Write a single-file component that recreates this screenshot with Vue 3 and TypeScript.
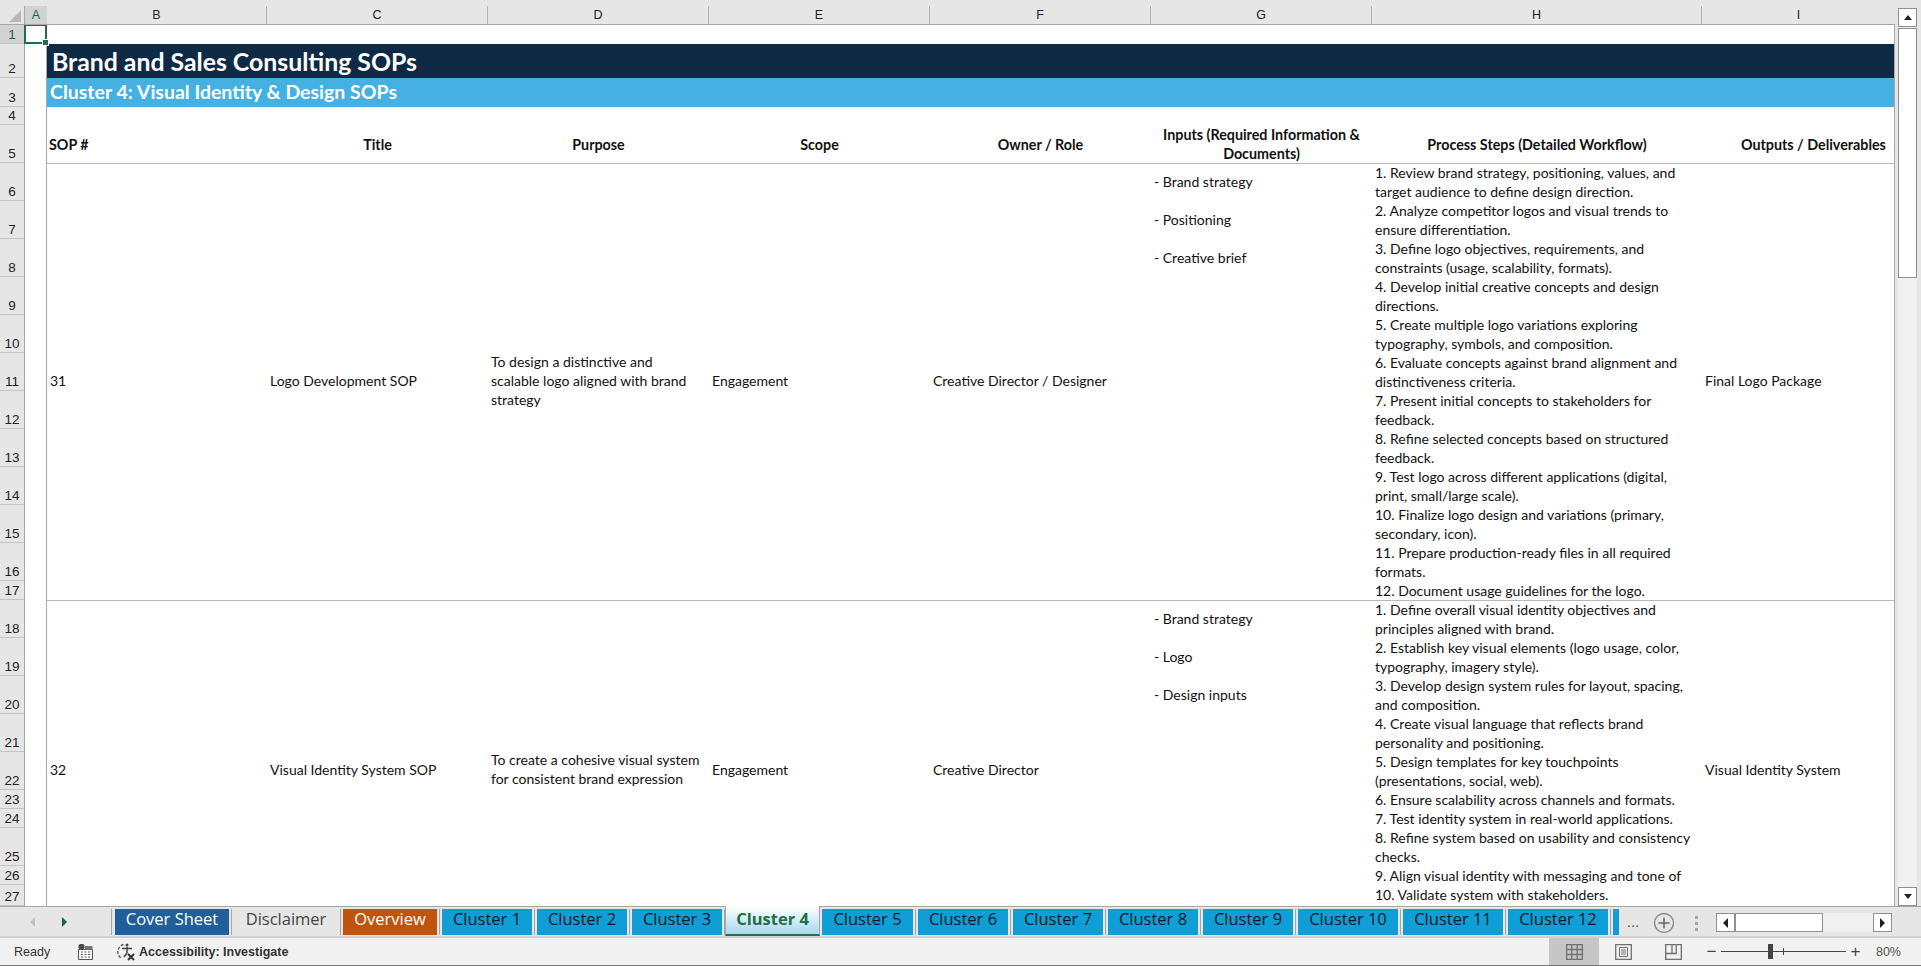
<script setup lang="ts">
// sheet columns B..I, row headers and tabs
const columns = ['B', 'C', 'D', 'E', 'F', 'G', 'H', 'I']

const rowHeads = [
  { n: 1, h: 19 }, { n: 2, h: 34 }, { n: 3, h: 29 }, { n: 4, h: 18 }, { n: 5, h: 38 },
  { n: 6, h: 38 }, { n: 7, h: 38 }, { n: 8, h: 38 }, { n: 9, h: 38 }, { n: 10, h: 38 },
  { n: 11, h: 38 }, { n: 12, h: 38 }, { n: 13, h: 38 }, { n: 14, h: 38 }, { n: 15, h: 38 },
  { n: 16, h: 38 }, { n: 17, h: 19 }, { n: 18, h: 38 }, { n: 19, h: 38 }, { n: 20, h: 38 },
  { n: 21, h: 38 }, { n: 22, h: 38 }, { n: 23, h: 19 }, { n: 24, h: 19 }, { n: 25, h: 38 },
  { n: 26, h: 19 }, { n: 27, h: 21 },
]

const records = [
  {
    id: '31',
    title: 'Logo Development SOP',
    purpose: ['To design a distinctive and', 'scalable logo aligned with brand', 'strategy'],
    scope: 'Engagement',
    owner: 'Creative Director / Designer',
    inputs: ['- Brand strategy', '- Positioning', '- Creative brief'],
    steps: [
      '1. Review brand strategy, positioning, values, and',
      'target audience to define design direction.',
      '2. Analyze competitor logos and visual trends to',
      'ensure differentiation.',
      '3. Define logo objectives, requirements, and',
      'constraints (usage, scalability, formats).',
      '4. Develop initial creative concepts and design',
      'directions.',
      '5. Create multiple logo variations exploring',
      'typography, symbols, and composition.',
      '6. Evaluate concepts against brand alignment and',
      'distinctiveness criteria.',
      '7. Present initial concepts to stakeholders for',
      'feedback.',
      '8. Refine selected concepts based on structured',
      'feedback.',
      '9. Test logo across different applications (digital,',
      'print, small/large scale).',
      '10. Finalize logo design and variations (primary,',
      'secondary, icon).',
      '11. Prepare production-ready files in all required',
      'formats.',
      '12. Document usage guidelines for the logo.',
    ],
    output: 'Final Logo Package',
  },
  {
    id: '32',
    title: 'Visual Identity System SOP',
    purpose: ['To create a cohesive visual system', 'for consistent brand expression'],
    scope: 'Engagement',
    owner: 'Creative Director',
    inputs: ['- Brand strategy', '- Logo', '- Design inputs'],
    steps: [
      '1. Define overall visual identity objectives and',
      'principles aligned with brand.',
      '2. Establish key visual elements (logo usage, color,',
      'typography, imagery style).',
      '3. Develop design system rules for layout, spacing,',
      'and composition.',
      '4. Create visual language that reflects brand',
      'personality and positioning.',
      '5. Design templates for key touchpoints',
      '(presentations, social, web).',
      '6. Ensure scalability across channels and formats.',
      '7. Test identity system in real-world applications.',
      '8. Refine system based on usability and consistency',
      'checks.',
      '9. Align visual identity with messaging and tone of',
      '10. Validate system with stakeholders.',
    ],
    output: 'Visual Identity System',
  },
]

const tabs = [
  { name: 'Cover Sheet', w: 114, kind: 'navy' },
  { name: 'Disclaimer', w: 104, kind: 'plain' },
  { name: 'Overview', w: 94, kind: 'rust' },
  { name: 'Cluster 1', w: 90, kind: 'blue' },
  { name: 'Cluster 2', w: 90, kind: 'blue' },
  { name: 'Cluster 3', w: 90, kind: 'blue' },
  { name: 'Cluster 4', w: 95, kind: 'active' },
  { name: 'Cluster 5', w: 91, kind: 'blue' },
  { name: 'Cluster 6', w: 90, kind: 'blue' },
  { name: 'Cluster 7', w: 90, kind: 'blue' },
  { name: 'Cluster 8', w: 90, kind: 'blue' },
  { name: 'Cluster 9', w: 90, kind: 'blue' },
  { name: 'Cluster 10', w: 100, kind: 'blue' },
  { name: 'Cluster 11', w: 100, kind: 'blue' },
  { name: 'Cluster 12', w: 100, kind: 'blue' },
]
</script>

<template>
  <div class="excel">
    <div class="top-strip"></div>

    <div class="workspace">
      <div class="grid-area">
        <div class="col-heads">
          <div class="corner"><span class="corner-tri"></span></div>
          <div class="col-head col-a">A</div>
          <div v-for="c in columns" :key="c" class="col-head">{{ c }}</div>
        </div>

        <div class="sheet">
          <div class="row-heads">
            <div
              v-for="r in rowHeads"
              :key="r.n"
              class="row-head"
              :class="{ sel: r.n === 1 }"
              :style="{ height: r.h + 'px' }"
            >{{ r.n }}</div>
          </div>

          <div class="col-a-cells">
            <div class="active-cell"><span class="fill-handle"></span></div>
          </div>

          <div class="cells">
            <div class="row-blank"></div>
            <div class="title-row">Brand and Sales Consulting SOPs</div>
            <div class="sub-row">Cluster 4: Visual Identity &amp; Design SOPs</div>
            <div class="row-gap"></div>

            <div class="head-row cols">
              <div class="hc left">SOP #</div>
              <div class="hc">Title</div>
              <div class="hc">Purpose</div>
              <div class="hc">Scope</div>
              <div class="hc">Owner / Role</div>
              <div class="hc">Inputs (Required Information &amp;<br />Documents)</div>
              <div class="hc">Process Steps (Detailed Workflow)</div>
              <div class="hc right">Outputs / Deliverables</div>
            </div>

            <div v-for="rec in records" :key="rec.id" class="record cols">
              <div class="td">{{ rec.id }}</div>
              <div class="td">{{ rec.title }}</div>
              <div class="td">
                <div v-for="l in rec.purpose" :key="l">{{ l }}</div>
              </div>
              <div class="td">{{ rec.scope }}</div>
              <div class="td">{{ rec.owner }}</div>
              <div class="td inputs">
                <div v-for="l in rec.inputs" :key="l" class="input-line">{{ l }}</div>
              </div>
              <div class="td steps">
                <div v-for="l in rec.steps" :key="l">{{ l }}</div>
              </div>
              <div class="td">{{ rec.output }}</div>
            </div>
          </div>
        </div>
      </div>

      <div class="v-scroll">
        <div class="sb-btn"><span class="tri up"></span></div>
        <div class="v-track"><div class="v-thumb"></div></div>
        <div class="sb-btn"><span class="tri down"></span></div>
      </div>
    </div>

    <div class="tab-strip">
      <div class="tab-nav">
        <span class="nav prev"></span>
        <span class="nav next"></span>
      </div>
      <div class="tabs">
        <div
          v-for="t in tabs"
          :key="t.name"
          class="tab"
          :class="t.kind"
          :style="{ width: t.w + 'px' }"
        >{{ t.name }}</div>
        <div class="tab blue stub"></div>
      </div>
      <div class="more">...</div>
      <svg class="add" width="22" height="22" viewBox="0 0 22 22">
        <circle cx="11" cy="11" r="9.5" fill="none" stroke="#8a8a8a" stroke-width="1.4" />
        <path d="M11 5.5v11M5.5 11h11" stroke="#6a6a6a" stroke-width="1.6" />
      </svg>
      <div class="split-dots"><i></i><i></i><i></i></div>
      <div class="h-scroll">
        <div class="sb-btn h"><span class="tri left"></span></div>
        <div class="h-track"><div class="h-thumb"></div></div>
        <div class="sb-btn h"><span class="tri right"></span></div>
      </div>
    </div>

    <div class="status-bar">
      <span class="ready">Ready</span>
      <svg class="macro" width="15" height="16" viewBox="0 0 15 16">
        <path d="M0.5 5.5h14v10h-14z" fill="#fff" stroke="#555" />
        <path d="M3 8h2M6.500 8h2M10 8h2M3 10.500h2M6.500 10.500h2M10 10.500h2M3 13h2M6.500 13h2M10 13h2" stroke="#555" stroke-width="1.200" />
        <rect x="0.500" y="0" width="6" height="5.500" rx="2" fill="#4a4a4a" />
        <rect x="7" y="2" width="7.500" height="3.500" fill="#777" />
      </svg>
      <svg class="a11y" width="20" height="20" viewBox="0 0 20 20">
        <path d="M7.500 2.500A7.500 7.500 0 0 0 6 16.500" fill="none" stroke="#555" stroke-width="1.300" stroke-dasharray="3 1.500" />
        <circle cx="11" cy="3" r="1.500" fill="#444" />
        <path d="M6 6.500h10M11 5v6" stroke="#444" stroke-width="1.500" />
        <path d="M11 11l-3 4" stroke="#444" stroke-width="1.500" />
        <path d="M12 12l6 6M18 12l-6 6" stroke="#333" stroke-width="2" />
      </svg>
      <span class="a11y-text">Accessibility: Investigate</span>

      <div class="view-btns">
        <div class="view-btn on">
          <svg width="17" height="16" viewBox="0 0 17 16">
            <path d="M.7.700h15.600v14.600H.7zM.7 5.500h15.600M.7 10.500h15.600M5.800.700v14.600M11.200.700v14.600" fill="none" stroke="#707070" stroke-width="1.300" />
          </svg>
        </div>
        <div class="view-btn">
          <svg width="17" height="16" viewBox="0 0 17 16">
            <path d="M.7.700h15.600v14.600H.7z" fill="none" stroke="#707070" stroke-width="1.300" />
            <path d="M4.500 3.500h8v9h-8z" fill="none" stroke="#707070" />
            <path d="M6 6h5M6 8h5M6 10h5" stroke="#707070" />
          </svg>
        </div>
        <div class="view-btn">
          <svg width="17" height="16" viewBox="0 0 17 16">
            <path d="M.7.700h15.600v14.600H.7zM.7 9.500h10.500V.7M7 .7v8.800" fill="none" stroke="#707070" stroke-width="1.300" />
          </svg>
        </div>
      </div>

      <div class="zoom-ctl">
        <span class="zoom-sign">−</span>
        <div class="slider"><i class="tick"></i><i class="knob"></i></div>
        <span class="zoom-sign">+</span>
      </div>
      <span class="pct">80%</span>
    </div>
  </div>
</template>

<style>
html,
body {
  margin: 0;
  overflow: hidden;
  background: #fff;
}
</style>

<style scoped>
.excel {
  width: 1921px;
  height: 966px;
  display: flex;
  flex-direction: column;
  overflow: hidden;
  background: #e6e6e6;
  font-family: Lato, "Liberation Sans", Arial, sans-serif;
  color: #111;
}

.top-strip {
  height: 6px;
  flex: none;
}

.workspace {
  flex: none;
  height: 900px;
  display: flex;
}

.grid-area {
  width: 1895px;
  display: flex;
  flex-direction: column;
}

/* column letters */
.col-heads {
  height: 19px;
  flex: none;
  display: grid;
  grid-template-columns: 25px 22px 220px 221px 221px 221px 221px 221px 330px 193px;
  box-sizing: border-box;
  border-bottom: 1px solid #a6a6a6;
  font-family: "Liberation Sans", Arial, sans-serif;
  font-size: 12.500px;
}

.col-head {
  display: flex;
  align-items: center;
  justify-content: center;
  border-right: 1px solid #b4b4b4;
  color: #222;
}

.col-head:last-child {
  border-right: none;
}

.col-a {
  background: #d2d2d2;
  color: #17693c;
  border-right: none;
}

.corner {
  position: relative;
  border-right: 1px solid #a6a6a6;
}

.corner-tri {
  position: absolute;
  right: 3px;
  bottom: 2px;
  width: 0;
  height: 0;
  border-left: 12px solid transparent;
  border-bottom: 12px solid #b9b9b9;
}

.sheet {
  flex: 1;
  min-height: 0;
  display: flex;
  overflow: hidden;
  box-sizing: border-box;
  background: #fff;
  border-right: 1px solid #a6a6a6;
}

/* row numbers */
.row-heads {
  width: 25px;
  flex: none;
  box-sizing: border-box;
  border-right: 1px solid #a6a6a6;
  background: #e6e6e6;
  font-family: "Liberation Sans", Arial, sans-serif;
  font-size: 13.500px;
}

.row-head {
  box-sizing: border-box;
  display: flex;
  align-items: flex-end;
  justify-content: center;
  line-height: 16px;
  border-bottom: 1px solid #c4c4c4;
  color: #222;
}

.row-head.sel {
  background: #d2d2d2;
  color: #17693c;
}

.col-a-cells {
  width: 22px;
  flex: none;
  box-sizing: border-box;
  position: relative;
  border-right: 1px solid #a8a8a8;
}

.active-cell {
  position: absolute;
  left: -1px;
  top: -1px;
  width: 23px;
  height: 20px;
  box-sizing: border-box;
  border: 2px solid #1f6f45;
}

.fill-handle {
  position: absolute;
  right: -4px;
  bottom: -4px;
  width: 5px;
  height: 5px;
  background: #1f6f45;
  border: 1px solid #fff;
}

.cells {
  flex: 1;
  min-width: 0;
}

.row-blank {
  height: 19px;
}

.title-row {
  height: 34px;
  line-height: 36px;
  padding-left: 5px;
  background: #0f2a44;
  color: #fff;
  font-size: 24.800px;
  font-weight: 700;
}

.sub-row {
  height: 29px;
  line-height: 28px;
  padding-left: 3px;
  background: #45b0e1;
  color: #fff;
  font-size: 19.500px;
  font-weight: 700;
}

.row-gap {
  height: 18px;
}

.cols {
  display: grid;
  grid-template-columns: 220px 221px 221px 221px 221px 221px 330px 192px;
}

.head-row {
  height: 38px;
  font-size: 14.300px;
  font-weight: 700;
  line-height: 19px;
}

.hc {
  display: flex;
  align-items: center;
  justify-content: center;
  text-align: center;
  padding-bottom: 1px;
}

.hc.left {
  justify-content: flex-start;
  padding-left: 2px;
}

.hc.right {
  justify-content: flex-start;
  padding-left: 39px;
}

.record {
  height: 436px;
  border-top: 1px solid #b9b9b9;
  font-size: 14px;
  line-height: 19px;
}

.record + .record {
  height: 340px;
}

.td {
  padding-left: 3px;
  padding-bottom: 4px;
  align-self: center;
  white-space: nowrap;
}

.td.inputs {
  align-self: start;
  margin-top: -1px;
  padding-bottom: 0;
}

.input-line {
  height: 38px;
  line-height: 38px;
}

.td.steps {
  align-self: start;
  margin-top: -1px;
  padding-bottom: 0;
}

/* vertical scroll bar */
.v-scroll {
  width: 26px;
  flex: none;
  box-sizing: border-box;
  padding: 2px 4px 0 3px;
  display: flex;
  flex-direction: column;
}

.sb-btn {
  height: 19px;
  flex: none;
  box-sizing: border-box;
  display: flex;
  align-items: center;
  justify-content: center;
  background: #fff;
  border: 1px solid #8f8f8f;
}

.v-track {
  flex: 1;
  padding-top: 1px;
  background: #f0f0f0;
}

.v-thumb {
  height: 250px;
  box-sizing: border-box;
  background: #fff;
  border: 1px solid #8f8f8f;
}

.tri {
  width: 0;
  height: 0;
  display: block;
}

.tri.up {
  border-left: 4px solid transparent;
  border-right: 4px solid transparent;
  border-bottom: 5px solid #222;
}

.tri.down {
  border-left: 4px solid transparent;
  border-right: 4px solid transparent;
  border-top: 5px solid #222;
}

.tri.left {
  border-top: 5px solid transparent;
  border-bottom: 5px solid transparent;
  border-right: 5px solid #222;
}

.tri.right {
  border-top: 5px solid transparent;
  border-bottom: 5px solid transparent;
  border-left: 5px solid #222;
}

/* sheet tabs */
.tab-strip {
  height: 32px;
  flex: none;
  box-sizing: border-box;
  display: flex;
  align-items: flex-start;
  border-top: 1px solid #a6a6a6;
  border-bottom: 2px solid #d0d0d0;
  position: relative;
}

.tab-nav {
  width: 112px;
  height: 26px;
  margin-top: 2px;
  flex: none;
  position: relative;
  box-sizing: border-box;
  border-right: 1px solid #a6a6a6;
}

.nav {
  position: absolute;
  top: 8px;
  width: 0;
  height: 0;
  border-top: 5px solid transparent;
  border-bottom: 5px solid transparent;
}

.nav.prev {
  left: 30px;
  border-right: 5px solid #c2c2c2;
}

.nav.next {
  left: 62px;
  border-left: 5px solid #17693c;
}

.tabs {
  display: flex;
  gap: 5px;
  padding-left: 3px;
  flex: none;
}

.tab {
  height: 26px;
  margin-top: 2px;
  flex: none;
  box-sizing: border-box;
  position: relative;
  font-family: "Open Sans", "Noto Sans", Arial, sans-serif;
  font-size: 16.500px;
  line-height: 20px;
  text-align: center;
  white-space: nowrap;
}

.tab::after {
  content: "";
  position: absolute;
  right: -3px;
  top: 0;
  width: 1px;
  height: 26px;
  background: #a6a6a6;
}

.tab.navy {
  background: #215f9a;
  color: #fff;
}

.tab.plain {
  color: #444;
}

.tab.rust {
  background: #c0540f;
  color: #fff;
}

.tab.blue {
  background: #0f9ed5;
  color: #0a1a24;
}

.tab.active {
  margin: -1px -3px 0 -2px;
  height: 30px;
  padding-top: 3px;
  background: linear-gradient(#fff, #a8d7ef);
  border-left: 1px solid #a6a6a6;
  border-right: 1px solid #a6a6a6;
  border-bottom: 2px solid #217346;
  color: #1f6f45;
  font-weight: 700;
}

.tab.active::after {
  display: none;
}

.tab.stub {
  width: 6px;
}

.tab.stub::after {
  display: none;
}

.more {
  width: 28px;
  margin-top: 6px;
  flex: none;
  font-family: "Liberation Sans", Arial, sans-serif;
  font-size: 15px;
  text-align: center;
  color: #17693c;
}

.add {
  margin-left: 6px;
  margin-top: 5px;
  flex: none;
}

.split-dots {
  margin-left: 20px;
  margin-top: 9px;
  display: flex;
  flex-direction: column;
  gap: 3px;
}

.split-dots i {
  display: block;
  width: 3px;
  height: 3px;
  background: #a8a8a8;
}

.h-scroll {
  margin-left: 18px;
  margin-top: 6px;
  width: 176px;
  height: 19px;
  display: flex;
}

.sb-btn.h {
  width: 19px;
}

.h-track {
  flex: 1;
  background: #f0f0f0;
}

.h-thumb {
  width: 88px;
  height: 100%;
  box-sizing: border-box;
  background: #fff;
  border: 1px solid #8f8f8f;
}

/* status bar */
.status-bar {
  flex: 1;
  display: flex;
  align-items: center;
  box-sizing: border-box;
  background: #f1f1f1;
  border-bottom: 1px solid #7a7a7a;
  font-family: "Liberation Sans", Arial, sans-serif;
  font-size: 12.500px;
  color: #333;
}

.ready {
  margin-left: 14px;
  width: 64px;
}

.macro {
  flex: none;
}

.a11y {
  margin-left: 23px;
  flex: none;
}

.a11y-text {
  margin-left: 3px;
  font-weight: 700;
}

.view-btns {
  margin-left: auto;
  display: flex;
  height: 100%;
}

.view-btn {
  width: 49.500px;
  display: flex;
  align-items: center;
  justify-content: center;
}

.view-btn.on {
  background: #c6c6c6;
}

.zoom-ctl {
  margin-left: 7px;
  display: flex;
  align-items: center;
  gap: 3px;
}

.zoom-sign {
  font-size: 17px;
  width: 13px;
  text-align: center;
  color: #444;
}

.slider {
  width: 125px;
  height: 1px;
  position: relative;
  background: #444;
}

.knob {
  position: absolute;
  left: 47px;
  top: -7px;
  width: 5px;
  height: 15px;
  background: #444;
}

.tick {
  position: absolute;
  left: 62px;
  top: -3px;
  width: 1px;
  height: 7px;
  background: #444;
}

.pct {
  margin-left: 14px;
  margin-right: 20px;
  font-size: 12.500px;
  color: #555;
}
</style>
